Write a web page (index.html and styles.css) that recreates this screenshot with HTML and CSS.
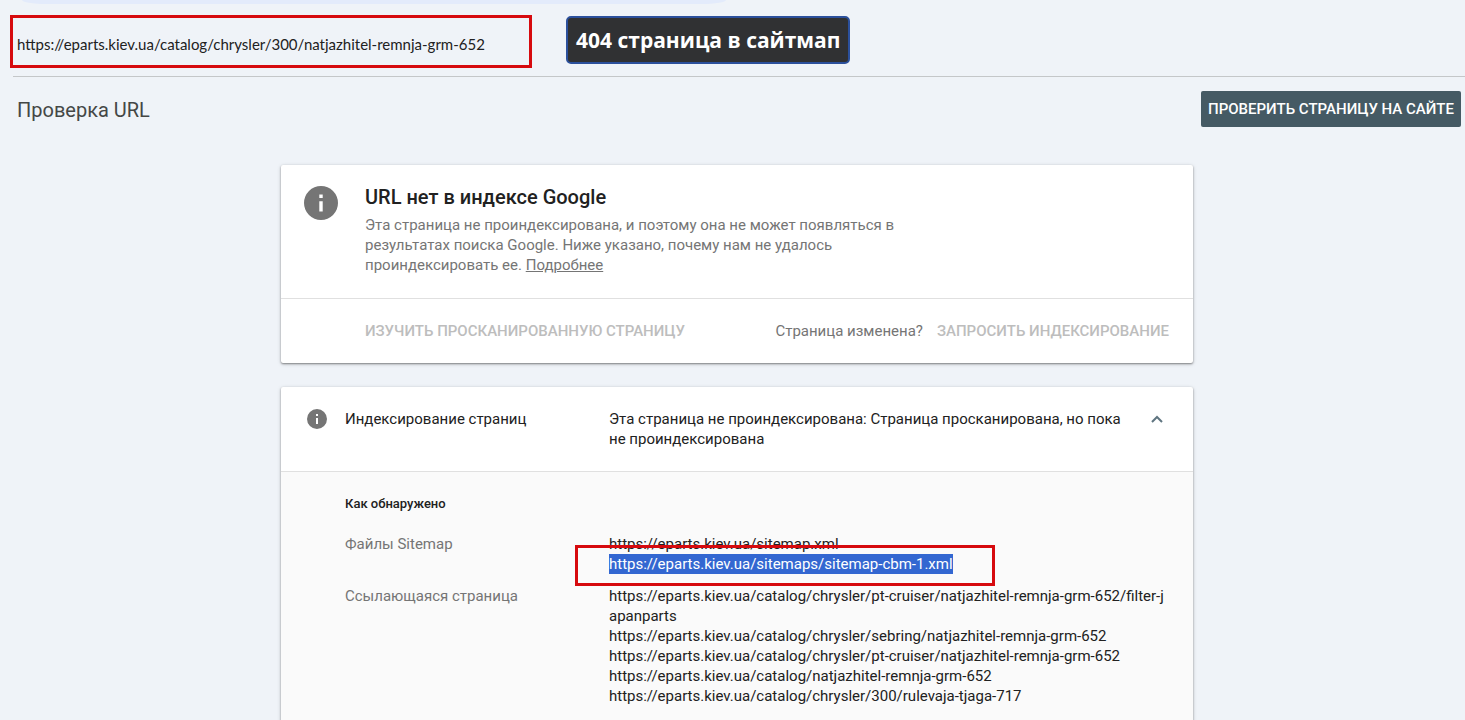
FILE: index.html
```
<!DOCTYPE html>
<html lang="ru">
<head>
<meta charset="utf-8">
<meta name="viewport" content="width=device-width, initial-scale=1">
<title>Проверка URL</title>
<link rel="stylesheet" href="styles.css">
</head>
<body>
<div class="search-edge"></div>
<header class="url-bar">
  <div class="url">https://eparts.kiev.ua/catalog/chrysler/300/natjazhitel-remnja-grm-652<span class="mark mark-url"></span></div>
  <div class="note">404 страница в сайтмап</div>
</header>
<main class="page">
  <div class="toolbar">
    <h1 class="page-title">Проверка URL</h1>
    <button class="live-test" type="button">ПРОВЕРИТЬ СТРАНИЦУ НА САЙТЕ</button>
  </div>
  <div class="cards">
    <section class="card">
      <div class="verdict">
        <svg class="icon-large" viewBox="2 2 20 20" aria-hidden="true"><path fill="#757575" d="M12 2a10 10 0 1 0 0 20 10 10 0 0 0 0-20zm1 15h-2v-6h2zm0-8h-2V7h2z"/></svg>
        <div>
          <h2 class="verdict-title">URL нет в индексе Google</h2>
          <p class="verdict-text">Эта страница не проиндексирована, и поэтому она не может появляться в результатах поиска Google. Ниже указано, почему нам не удалось проиндексировать ее. <a class="more" href="#">Подробнее</a></p>
        </div>
      </div>
      <div class="actions">
        <button class="action" type="button" disabled>ИЗУЧИТЬ ПРОСКАНИРОВАННУЮ СТРАНИЦУ</button>
        <div class="request">
          <span>Страница изменена?</span>
          <button class="action" type="button" disabled>ЗАПРОСИТЬ ИНДЕКСИРОВАНИЕ</button>
        </div>
      </div>
    </section>
    <section class="card">
      <div class="summary">
        <svg class="icon-small" viewBox="2 2 20 20" aria-hidden="true"><path fill="#757575" d="M12 2a10 10 0 1 0 0 20 10 10 0 0 0 0-20zm1 15h-2v-6h2zm0-8h-2V7h2z"/></svg>
        <span class="summary-name">Индексирование страниц</span>
        <span class="summary-state">Эта страница не проиндексирована: Страница просканирована, но пока не проиндексирована</span>
        <button class="toggle" type="button" aria-label="Свернуть"><svg viewBox="0 0 12 8" width="12" height="8" aria-hidden="true"><path d="M1 7l5-5 5 5" fill="none" stroke="#5f7580" stroke-width="2"/></svg></button>
      </div>
      <div class="details">
        <h3 class="details-title">Как обнаружено</h3>
        <dl class="facts">
          <dt>Файлы Sitemap</dt>
          <dd>
            <div>https://eparts.kiev.ua/sitemap.xml</div>
            <div class="marked"><span class="selected">https://eparts.kiev.ua/sitemaps/sitemap-cbm-1.xml</span><span class="mark mark-sitemap"></span></div>
          </dd>
          <dt>Ссылающаяся страница</dt>
          <dd>
            <div>https://eparts.kiev.ua/catalog/chrysler/pt-cruiser/natjazhitel-remnja-grm-652/filter-japanparts</div>
            <div>https://eparts.kiev.ua/catalog/chrysler/sebring/natjazhitel-remnja-grm-652</div>
            <div>https://eparts.kiev.ua/catalog/chrysler/pt-cruiser/natjazhitel-remnja-grm-652</div>
            <div>https://eparts.kiev.ua/catalog/natjazhitel-remnja-grm-652</div>
            <div>https://eparts.kiev.ua/catalog/chrysler/300/rulevaja-tjaga-717</div>
          </dd>
        </dl>
      </div>
    </section>
  </div>
</main>
</body>
</html>
```
FILE: styles.css
```
* { box-sizing: border-box; }
body {
  margin: 0;
  background: #eff3f8;
  color: #212121;
  font: 15px/20px Roboto, sans-serif;
}
h1, h2, h3, p, dl, dd { margin: 0; }
button { font-family: inherit; border: 0; padding: 0; background: none; }

.search-edge {
  height: 4px;
  width: 704px;
  margin-left: 22px;
  background: #e3ebfb;
  border-radius: 0 0 24px 24px / 0 0 4px 4px;
}
.url-bar {
  display: flex;
  align-items: center;
  height: 73px;
  margin-left: 13px;
  padding: 0 4px;
  gap: 69px;
  border-bottom: 1px solid #c4c7c9;
}
.url {
  position: relative;
  width: 480px;
  padding-top: 7px;
  font: 15px/20px Lato, sans-serif;
  white-space: nowrap;
}
.mark { position: absolute; border: 3px solid #d60a0e; pointer-events: none; }
.mark-url { left: -7px; right: -35px; top: -12px; bottom: -14px; }
.note {
  padding: 8px;
  border: 2px solid #2b509c;
  border-radius: 5px;
  background: #303133;
  color: #fff;
  font: 700 21px/28px "Open Sans", sans-serif;
  white-space: nowrap;
}
.page { padding: 14px 4px 0 13px; }
.toolbar { display: flex; justify-content: space-between; align-items: center; padding-left: 4px; }
.page-title { padding-top: 2px; font-size: 20px; line-height: 28px; font-weight: 400; color: #444746; }
.live-test {
  height: 36px;
  padding: 0 7px;
  border-radius: 2px;
  background: #455a64;
  color: #fff;
  font-size: 15px;
  font-weight: 500;
}
.cards { display: grid; gap: 24px; max-width: 912px; margin: 38px auto 0; }
.card {
  background: #fff;
  border-radius: 2px;
  overflow: hidden;
  box-shadow: 0 1px 2px rgba(0, 0, 0, .4), 0 1px 4px rgba(0, 0, 0, .16);
}
.verdict { display: flex; gap: 27px; padding: 20px 24px 23px 23px; border-bottom: 1px solid #e0e0e0; }
.icon-large { flex: none; width: 34px; height: 34px; margin-top: 1px; }
.verdict-title { font-size: 20px; line-height: 24px; font-weight: 500; }
.verdict-text { max-width: 560px; margin-top: 6px; color: #757575; }
.more { color: inherit; }
.actions {
  display: flex;
  justify-content: space-between;
  align-items: center;
  min-height: 64px;
  padding: 0 24px 0 84px;
  color: #757575;
}
.action { color: #bdbdbd; font-size: 15px; line-height: 20px; font-weight: 500; }
.request { display: flex; align-items: center; gap: 14px; }
.summary {
  display: grid;
  grid-template-columns: 20px 248px 1fr 16px;
  column-gap: 16px;
  padding: 22px 26px;
  border-bottom: 1px solid #e0e0e0;
}
.icon-small { width: 20px; height: 20px; }
.toggle { display: flex; align-items: center; height: 20px; }
.summary-name { padding-left: 2px; }
.summary-state { padding-left: 2px; }
.details { padding: 22px 26px 24px 64px; background: #fafafa; }
.details-title { font-size: 13px; line-height: 20px; font-weight: 500; }
.facts { display: grid; grid-template-columns: 264px 1fr; row-gap: 12px; margin-top: 20px; }
.facts dt { color: #757575; }
.facts dd { word-break: break-all; }
.marked { position: relative; }
.selected { display: inline-block; background: #3367d1; color: #fff; }
.mark-sitemap { left: -34px; width: 420px; top: -9px; height: 41px; }
```
